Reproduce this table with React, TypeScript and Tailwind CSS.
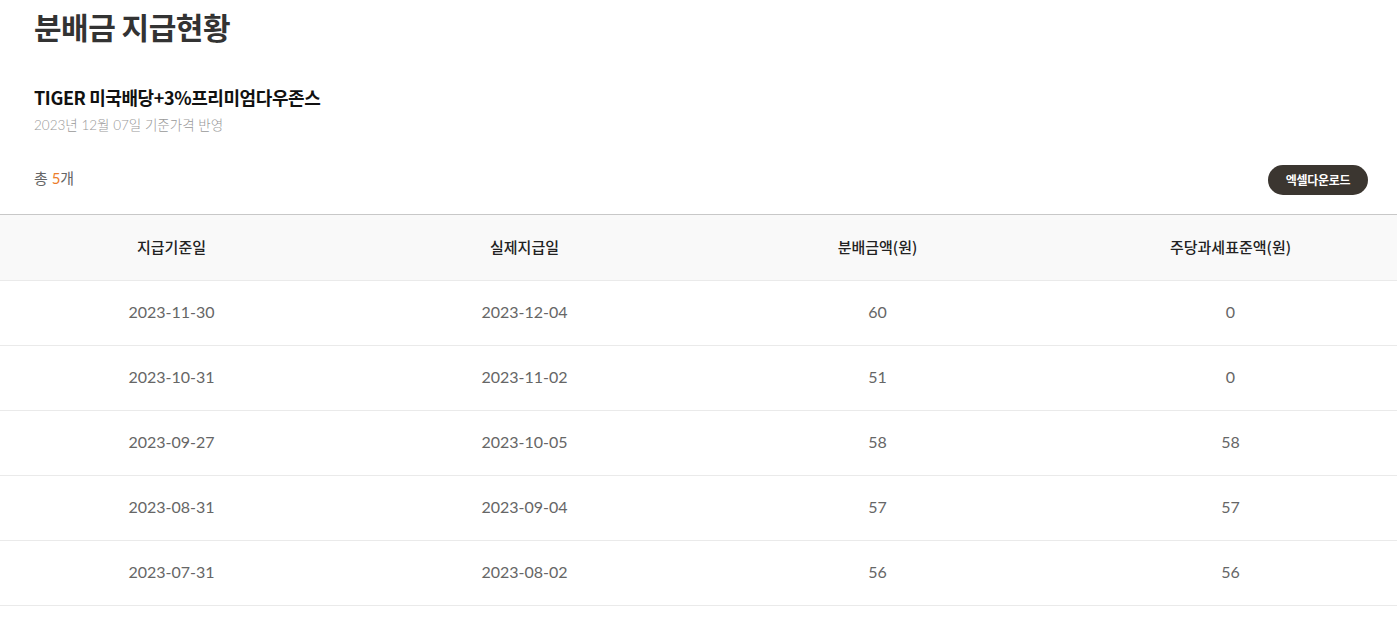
import React from "react";

const rows = [
  ["2023-11-30", "2023-12-04", "60", "0"],
  ["2023-10-31", "2023-11-02", "51", "0"],
  ["2023-09-27", "2023-10-05", "58", "58"],
  ["2023-08-31", "2023-09-04", "57", "57"],
  ["2023-07-31", "2023-08-02", "56", "56"],
];

const kr = "font-['Noto_Sans_CJK_KR','Noto_Sans',sans-serif]";
const num = "font-['Lato','Noto_Sans_CJK_KR',sans-serif]";

export default function App() {
  return (
    <div className={`w-[1397px] h-[626px] overflow-hidden bg-white ${kr}`}>
      <div className="pl-[34px] pr-[29px]">
        <h1 className="pt-[4px] text-[30px] leading-[44px] font-bold text-[#333] tracking-[-0.5px]">
          분배금 지급현황
        </h1>
        <h2 className="mt-[36px] text-[18px] leading-[26px] font-bold text-[#111] tracking-[-0.4px]">
          TIGER 미국배당+3%프리미엄다우존스
        </h2>
        <p className={`mt-[5px] text-[13.5px] leading-[20px] font-light text-[#999] ${num}`}>
          2023년 12월 07일 기준가격 반영
        </p>
        <div className="mt-[30px] flex items-center justify-between">
          <p className={`pb-[4px] text-[15px] leading-[20px] text-[#666] ${num}`}>
            총 <span className="text-[#ec7d2a]">5</span>개
          </p>
          <button className="h-[30px] w-[100px] rounded-full bg-[#3b3630] text-white text-[12px] font-bold tracking-[-0.3px]">
            엑셀다운로드
          </button>
        </div>
      </div>
      <div className="mt-[19px] -ml-[5px] w-[1412px]">
        <div className="grid grid-cols-4 h-[67px] items-center border-t border-b border-t-[#c8c8c8] border-b-[#eaeaea] bg-[#f9f9f9]">
          {["지급기준일", "실제지급일", "분배금액(원)", "주당과세표준액(원)"].map((h) => (
            <div key={h} className="text-center text-[15px] font-medium text-[#222]">
              {h}
            </div>
          ))}
        </div>
        {rows.map((r, i) => (
          <div key={i} className="grid grid-cols-4 h-[65px] items-center border-b border-[#eaeaea]">
            {r.map((c, j) => (
              <div key={j} className={`pb-[2px] text-center text-[16px] text-[#666] ${num}`}>
                {c}
              </div>
            ))}
          </div>
        ))}
      </div>
    </div>
  );
}
